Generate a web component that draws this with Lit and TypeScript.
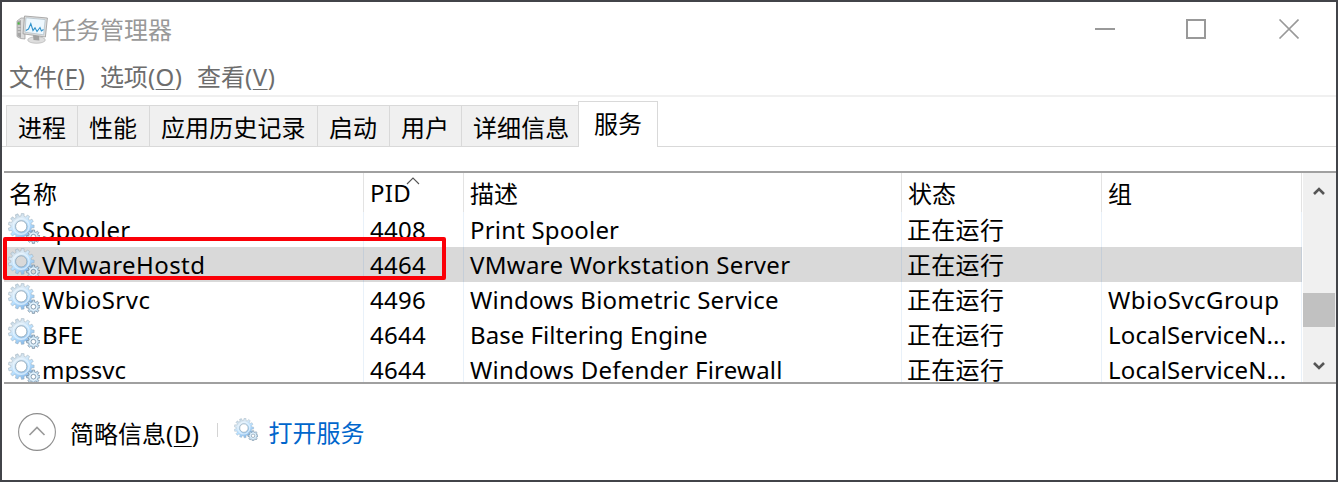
import { LitElement, html, css, svg } from "lit";
import { customElement, property } from "lit/decorators.js";
import { classMap } from "lit/directives/class-map.js";
import { styleMap } from "lit/directives/style-map.js";

interface Service {
  name: string;
  pid: string;
  description: string;
  group: string;
  selected?: boolean;
  // tracking in px for name, description and group
  track: [number, number, number];
}

const SERVICES: Service[] = [
  { name: "Spooler", pid: "4408", description: "Print Spooler", group: "", track: [0.25, 0.17, 0] },
  { name: "VMwareHostd", pid: "4464", description: "VMware Workstation Server", group: "", selected: true, track: [0.42, 0.29, 0] },
  { name: "WbioSrvc", pid: "4496", description: "Windows Biometric Service", group: "WbioSvcGroup", track: [0.48, 0.2, 0.48] },
  { name: "BFE", pid: "4644", description: "Base Filtering Engine", group: "LocalServiceN...", track: [0, 0.04, 0.15] },
  { name: "mpssvc", pid: "4644", description: "Windows Defender Firewall", group: "LocalServiceN...", track: [0, 0.24, 0.15] },
];

const TABS = [
  { label: "进程", width: 71 },
  { label: "性能", width: 72 },
  { label: "应用历史记录", width: 168 },
  { label: "启动", width: 72 },
  { label: "用户", width: 72 },
  { label: "详细信息", width: 117 },
];

function gearPath(cx: number, cy: number, outer: number, inner: number, hole: number, teeth: number): string {
  const step = (Math.PI * 2) / teeth;
  const pt = (a: number, r: number) => `${(cx + Math.cos(a) * r).toFixed(2)} ${(cy + Math.sin(a) * r).toFixed(2)}`;
  let d = "";
  for (let i = 0; i < teeth; i++) {
    const a = i * step;
    d += `${i ? "L" : "M"}${pt(a - step * 0.32, inner)}L${pt(a - step * 0.22, outer)}L${pt(a + step * 0.22, outer)}L${pt(a + step * 0.32, inner)}`;
  }
  return `${d}Z M${cx - hole} ${cy}a${hole} ${hole} 0 1 0 ${hole * 2} 0a${hole} ${hole} 0 1 0 ${-hole * 2} 0Z`;
}

const BIG_GEAR = gearPath(13.2, 13.4, 13, 10.4, 5.6, 13);
const SMALL_GEAR = gearPath(25.4, 23.7, 6.8, 5, 2.3, 8);

@customElement("gear-icon")
class GearIcon extends LitElement {
  @property({ type: Number }) size = 32;
  static styles = css`
    :host { display: block; line-height: 0; flex: none; }
  `;
  render() {
    return html`<svg width=${this.size} height=${this.size * 0.96875} viewBox="0 0 32 31">
      <defs>
        <linearGradient id="g" x1="0.1" y1="0" x2="0.7" y2="1">
          <stop offset="0" stop-color="#b4c9d8" />
          <stop offset=".3" stop-color="#dceaf5" />
          <stop offset=".6" stop-color="#b9e0ff" />
          <stop offset="1" stop-color="#7fb3e6" />
        </linearGradient>
      </defs>
      ${svg`<path d=${BIG_GEAR} fill="url(#g)" stroke="#94a8b6" stroke-width=".45" fill-rule="evenodd"/>
      <circle cx="13.2" cy="13.4" r="7.9" fill="none" stroke="#edf7ff" stroke-width="1.5" opacity=".65"/>
      <circle cx="13.2" cy="13.4" r="5.7" fill="none" stroke="#8fa5b6" stroke-width=".6"/>
      <path d=${SMALL_GEAR} fill="#bfdcf0" stroke="#73879a" stroke-width=".7" fill-rule="evenodd"/>
      <circle cx="25.4" cy="23.7" r="3.7" fill="none" stroke="#eef7fd" stroke-width="1"/>`}
    </svg>`;
  }
}

@customElement("app-root")
class AppRoot extends LitElement {
  static styles = css`
    :host {
      display: block;
      width: 1338px;
      height: 482px;
      font-family: "Noto Sans", "Noto Sans CJK SC", sans-serif;
      font-size: 24px;
      line-height: 34px;
      color: #000;
    }
    * { box-sizing: border-box; }
    svg { display: block; flex: none; }
    .window {
      position: relative;
      display: flex;
      flex-direction: column;
      width: 1338px;
      height: 482px;
      overflow: hidden;
      border: 2px solid #424449;
      background: #fff;
      white-space: nowrap;
    }
    .cjk { font-family: "Noto Sans CJK SC", sans-serif; }
    .titlebar { display: flex; height: 56px; padding: 10px 0 0 14px; color: #999; flex: none; }
    .title { margin-left: 4px; flex: 1; }
    .caption { display: flex; gap: 70px; margin: 7px 37px 0 0; }
    .menu { display: flex; gap: 14.5px; height: 37px; padding: 1px 0 0 7px; color: #6d6d6d; flex: none; }
    .paren { letter-spacing: 0.5px; }
    .key { text-decoration: underline; text-decoration-thickness: 1px; text-underline-offset: 3px; }
    .rule { height: 2px; background: #f0f0f0; flex: none; }
    .tabs { display: flex; align-items: flex-end; height: 50px; padding-left: 4px; border-bottom: 1px solid #d9d9d9; flex: none; }
    .tab {
      height: 41px;
      border: 1px solid #d9d9d9;
      border-width: 1px 0 0 1px;
      background: #f0f0f0;
      padding: 4px 0 0 11px;
      letter-spacing: 0.1px;
      flex: none;
    }
    .tab.active { width: 80px; height: 46px; margin-bottom: -1px; border-width: 1px 1px 0 1px; background: #fff; padding: 4px 0 0 15px; letter-spacing: 0; }
    .body { height: 238px; padding-top: 24px; flex: none; }
    .list { display: flex; height: 213px; margin-left: 2px; border-top: 2px solid #a0a0a0; border-bottom: 2px solid #a0a0a0; overflow: hidden; }
    .table { width: 1299px; flex: none; }
    .row { display: grid; grid-template-columns: 360px 100px 438px 200px 200px; width: 1298px; height: 35px; }
    .row.head { height: 39px; }
    .row.selected { background: #d9d9d9; }
    .cell { display: flex; border-right: 1px solid #e9f1f9; padding: 1px 0 0 6px; }
    .selected .cell { border-color: #c5ced8; }
    .head .cell { border-color: #e3e3e3; padding-top: 3px; }
    .cell.name { padding-left: 4px; gap: 2px; }
    .head .cell.name { padding-left: 5px; }
    .cell.cjk { padding-top: 0; padding-left: 5px; letter-spacing: 0.3px; }
    .head .cell.cjk { padding-top: 3px; padding-left: 6px; letter-spacing: 0; }
    .head .cell.cjk.name { padding-left: 5px; }
    .pid { letter-spacing: 0.3px; }
    .sort { margin: 1px 0 0 -5px; }
    .scroll { display: flex; flex-direction: column; width: 33px; background: #f0f0f0; }
    .up { padding: 13px 0 0 10px; height: 120px; }
    .thumb { width: 32px; height: 34px; background: #c1c1c1; }
    .down { padding: 34px 0 0 10px; }
    .footer { display: flex; align-items: center; height: 94px; padding-left: 16px; }
    .brief { margin: 2px 0 0 14px; }
    .divider { width: 1px; height: 14px; margin: -4px 16px 0 18px; background: #d4d4d4; }
    .footer gear-icon { margin-top: -5px; }
    .link { margin-left: 10px; color: #0066cc; }
    .mark { position: absolute; left: 1px; top: 235px; width: 443px; height: 43px; border: 4px solid #fb0007; border-radius: 2px; }
  `;

  private menuItem(label: string, key: string) {
    return html`<span><span class="cjk">${label}</span><span class="paren">(<span class="key">${key}</span>)</span></span>`;
  }

  private track(px: number) {
    return styleMap({ letterSpacing: `${px}px` });
  }

  render() {
    return html`<div class="window">
      <div class="titlebar">
        <svg width="32" height="32" viewBox="0 0 32 32">
          <path d="M1 9L5 6 9 6V27L4.5 26.5 1 24.5Z" fill="#dcdcdc" stroke="#999" stroke-width=".7" />
          <path d="M1.4 9.5L5 8V26L1.4 24Z" fill="#a6a6a6" />
          <path d="M1.8 14H4.5M1.8 17H4.5M1.8 20H4.5" stroke="#eee" />
          <rect x="1.6" y="10.4" width="2" height="2" fill="#48bd3f" />
          <ellipse cx="20.5" cy="28" rx="8.8" ry="3.3" fill="#dedede" stroke="#aaa" stroke-width=".6" />
          <path d="M17 23L23 23.5 23.4 28.5 17.5 28Z" fill="#a0a0a0" />
          <path d="M8.5 4L31.4 6 29.4 25 7 21.8Z" fill="#dedede" stroke="#999" stroke-width=".8" />
          <path d="M10 5.8L29.2 7.6 27.6 22.8 9 20.2Z" fill="#eef8fe" stroke="#a4b6c0" stroke-width=".6" />
          <path d="M9.8 18.5L12.5 17 14.8 11.5 17 18.5 19 15.8 21 19.5 24 15.5 25.4 19 27.5 17.5" fill="none" stroke="#3193cc" stroke-width="1.1" />
        </svg>
        <span class="title cjk">任务管理器</span>
        <div class="caption">
          <svg width="21" height="20" viewBox="0 0 21 20"><path d="M0 10H20" stroke="#999" stroke-width="2" /></svg>
          <svg width="21" height="20" viewBox="0 0 21 20"><rect x="1" y="1" width="18" height="18" fill="none" stroke="#999" stroke-width="2" /></svg>
          <svg width="22" height="20" viewBox="0 0 22 20"><path d="M2.5 .5L21.5 19.5M21.5 .5L2.5 19.5" stroke="#999" stroke-width="1.6" /></svg>
        </div>
      </div>
      <div class="menu">${this.menuItem("文件", "F")}${this.menuItem("选项", "O")}${this.menuItem("查看", "V")}</div>
      <div class="rule"></div>
      <div class="tabs">
        ${TABS.map((t) => html`<div class="tab cjk" style=${styleMap({ width: `${t.width}px` })}>${t.label}</div>`)}
        <div class="tab active cjk">服务</div>
      </div>
      <div class="body">
        <div class="list">
          <div class="table">
            <div class="row head">
              <div class="cell name cjk">名称</div>
              <div class="cell"><span class="pid">PID</span><svg class="sort" width="14" height="8" viewBox="0 0 14 8"><path d="M1 7L7 1 13 7" fill="none" stroke="#555" stroke-width="1.1" /></svg></div>
              <div class="cell cjk">描述</div>
              <div class="cell cjk">状态</div>
              <div class="cell cjk">组</div>
            </div>
            ${SERVICES.map(
              (s) => html`<div class=${classMap({ row: true, selected: !!s.selected })}>
                <div class="cell name"><gear-icon></gear-icon><span style=${this.track(s.track[0])}>${s.name}</span></div>
                <div class="cell pid">${s.pid}</div>
                <div class="cell"><span style=${this.track(s.track[1])}>${s.description}</span></div>
                <div class="cell cjk">正在运行</div>
                <div class="cell"><span style=${this.track(s.track[2])}>${s.group}</span></div>
              </div>`
            )}
          </div>
          <div class="scroll">
            <div class="up"><svg width="12" height="10" viewBox="0 0 12 10"><path d="M1 8L6 3 11 8" fill="none" stroke="#555" stroke-width="2.6" /></svg></div>
            <div class="thumb"></div>
            <div class="down"><svg width="12" height="10" viewBox="0 0 12 10"><path d="M1 2L6 7 11 2" fill="none" stroke="#555" stroke-width="2.6" /></svg></div>
          </div>
        </div>
      </div>
      <div class="footer">
        <svg width="38" height="38" viewBox="0 0 38 38"><circle cx="19" cy="19" r="18.4" fill="none" stroke="#8e8e8e" stroke-width="1.1" /><path d="M11.5 22L19 14.5 26.5 22" fill="none" stroke="#999" stroke-width="1.6" /></svg>
        <span class="brief">${this.menuItem("简略信息", "D")}</span>
        <span class="divider"></span>
        <gear-icon size="24"></gear-icon>
        <span class="link cjk">打开服务</span>
      </div>
      <div class="mark"></div>
    </div>`;
  }
}
